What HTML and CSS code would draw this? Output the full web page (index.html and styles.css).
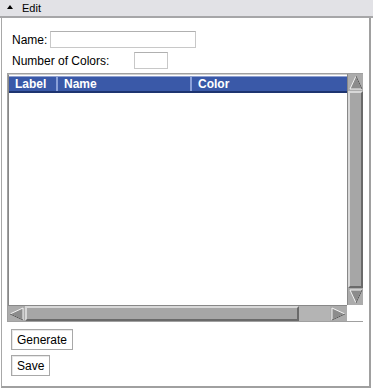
FILE: index.html
```html
<!DOCTYPE html>
<html>
<head>
<meta charset="utf-8" />
<title>Edit</title>
<link rel="stylesheet" href="styles.css">
</head>
<body>
<div class="panel">
    <div class="title"><span class="caret"></span>Edit</div>
    <div class="body">
        <div class="row"><label>Name:</label><input class="txt name" type="text" /></div>
        <div class="row"><label class="wide">Number of Colors:</label><input class="txt num" type="text" /></div>

        <div class="grid">
            <div class="view">
                <div class="head">
                    <div class="col c1">Label</div>
                    <div class="col c2">Name</div>
                    <div class="col c3">Color</div>
                </div>
            </div>
            <div class="vbar">
                <div class="btn up"><svg width="16" height="17"><polygon points="8,2 14,15 2,15" fill="#8c8c8c" stroke="#f4f4f4"/><line x1="14" y1="15" x2="8" y2="2" stroke="#555"/></svg></div>
                <div class="thumb v"></div>
                <div class="btn down"><svg width="16" height="17"><polygon points="2,2 14,2 8,15" fill="#8c8c8c" stroke="#f4f4f4"/><line x1="14" y1="2" x2="8" y2="15" stroke="#555"/></svg></div>
            </div>
            <div class="hbar">
                <div class="btn left"><svg width="17" height="16"><polygon points="2,8 15,2 15,14" fill="#8c8c8c" stroke="#f4f4f4"/><line x1="15" y1="14" x2="2" y2="8" stroke="#555"/></svg></div>
                <div class="thumb h"></div>
                <div class="gap"></div>
                <div class="btn right"><svg width="17" height="16"><polygon points="2,2 15,8 2,14" fill="#8c8c8c" stroke="#f4f4f4"/><line x1="15" y1="8" x2="2" y2="14" stroke="#555"/></svg></div>
            </div>
            <div class="corner"></div>
        </div>

        <div class="btns">
            <button>Generate</button>
            <button>Save</button>
        </div>
    </div>
</div>
</body>
</html>
```
FILE: styles.css
```css
body{margin:0; background:#fff; font-family:"Liberation Sans", Arial, sans-serif; font-size:12px; color:#000;}
.panel{width:371px; height:388px; box-sizing:border-box; display:flex; flex-direction:column;}

.title{height:18px; background:#e2e2e6; border-bottom:2px solid #a6a6a8; display:flex; align-items:center; padding-left:7px; font-size:11px; width:373px; box-sizing:border-box;}
.caret{width:0; height:0; border-left:3px solid transparent; border-right:3px solid transparent; border-bottom:4px solid #000; margin-right:9px; margin-top:-2px;}

.body{flex:1; border-left:1px solid #a8a8a8; border-right:2px solid #a0a0a0; border-bottom:2px solid #a0a0a0; margin-left:1px; padding:13px 0 0 5px;}

.row{display:flex; align-items:center; height:17px; margin-bottom:4px; padding-left:5px;}
.row label{width:38px;}
.row label.wide{width:122px;}
.txt{box-sizing:border-box; height:17px; border:1px solid #c8c8c8; border-top-color:#b0b0b0; padding:0; margin:0; background:#fff;}
.name{width:146px;}
.num{width:34px;}

.grid{width:356px; height:249px; display:grid; grid-template-columns:1fr 16px; grid-template-rows:1fr 16px; border:1px solid #a0a0a0; border-right:none; box-sizing:border-box;}
.view{background:#fff; border-top:1px solid #d0d0d0; border-left:1px solid #888; padding-top:1px;}
.head{display:flex; height:17px; background:#3a59a8; border-top:1px solid #8fa0d0; border-bottom:2px solid #1d3470; box-sizing:border-box; color:#fff; font-weight:bold; font-size:12px;}
.col{display:flex; align-items:center; padding-left:6px; border-right:2px solid #8aa0d8; box-sizing:border-box;}
.c1{width:49px;}
.c2{width:134px;}
.c3{flex:1; border-right:none;}

.vbar{display:flex; flex-direction:column; background:#b4b4b4; border-left:1px solid #888;}
.hbar{display:flex; background:#b4b4b4; border-top:1px solid #888;}
.corner{background:#fff;}
.btn{background:#acacac; display:flex; align-items:center; justify-content:center;}
.up,.down{height:17px;}
.left,.right{width:17px;}
.thumb{background:#a6a6a6; border:2px solid #6a6a6a; border-top-color:#d8d8d8; border-left-color:#d8d8d8; box-sizing:border-box;}
.thumb.v{flex:1;}
.thumb.h{width:274px;}
.gap{flex:1;}

.btns{display:flex; flex-direction:column; align-items:flex-start; gap:5px; padding:7px 0 0 4px;}
button{font-family:"Liberation Sans", Arial, sans-serif; font-size:12px; height:21px; background:#fff; border:1px solid #a8a8a8; box-shadow:inset 1px 1px 0 #e8e8e8; padding:0 5px; margin:0; color:#000;}
```
